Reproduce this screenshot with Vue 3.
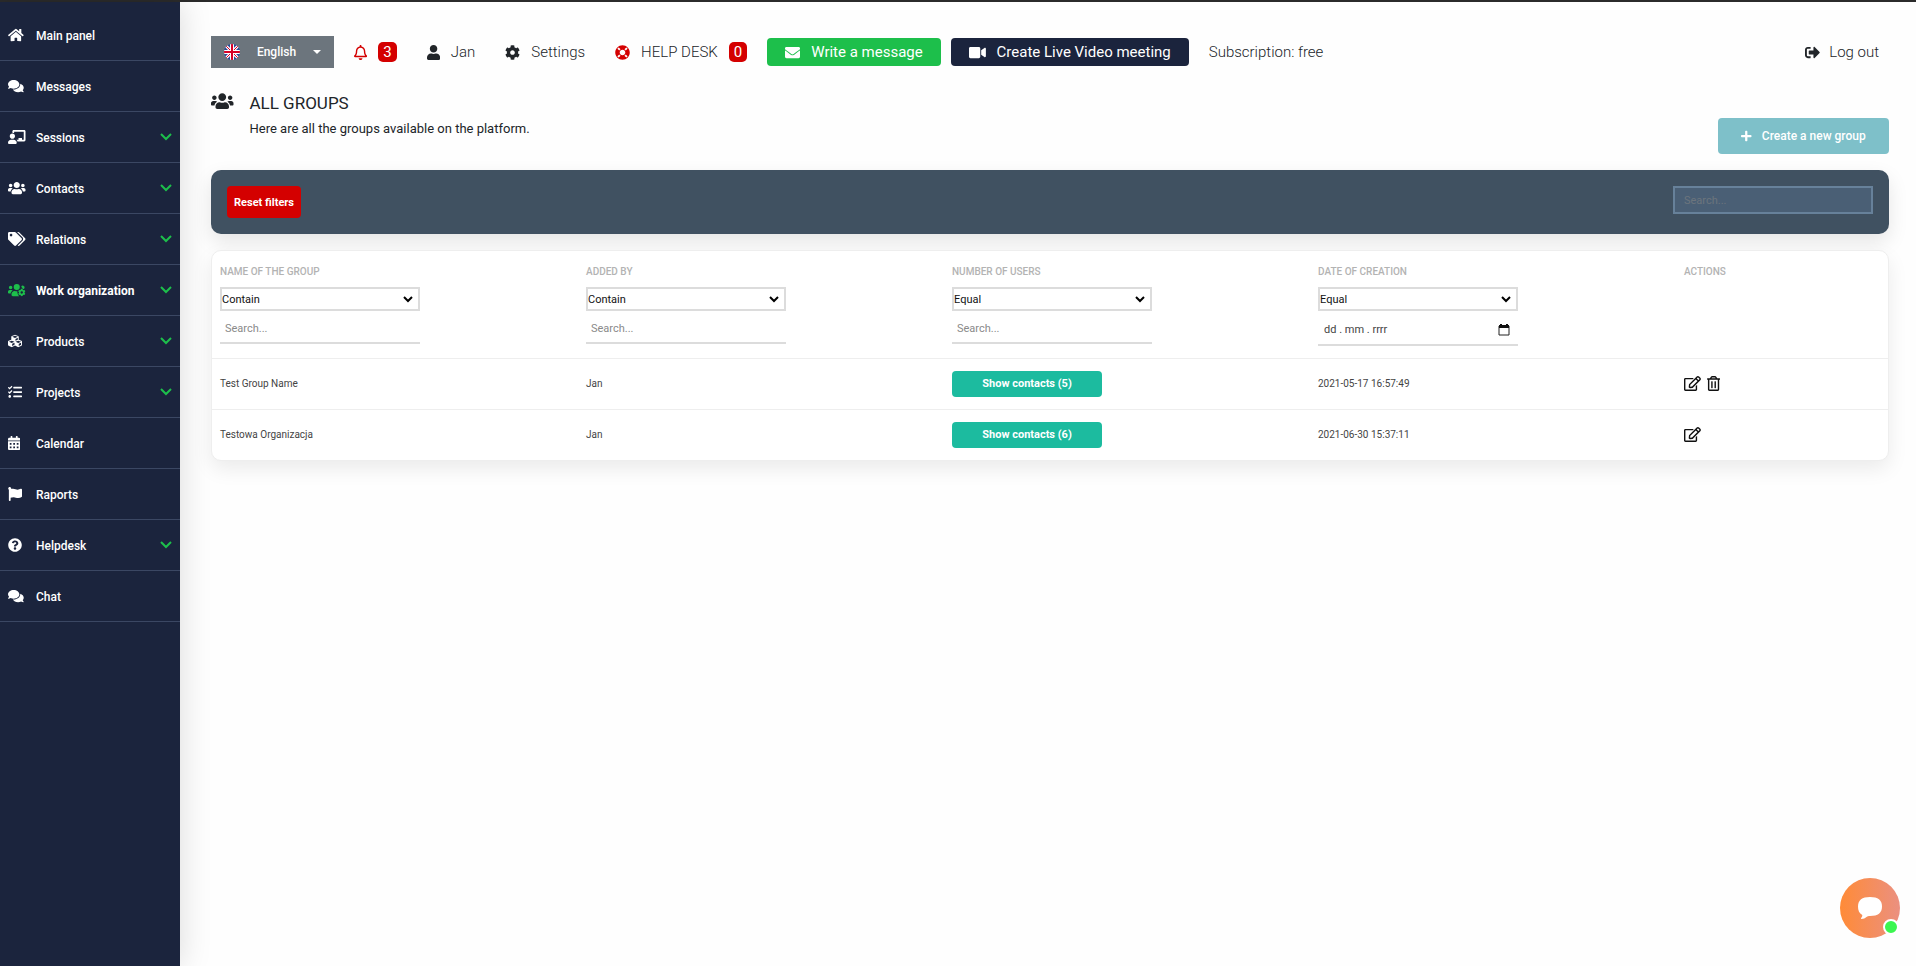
<template>
	<div class="app">
		<aside class="sidebar">
			<nav>
				<a v-for="item in menu" :key="item.label" href="#" class="menu-item" :class="{active: item.active}">
					<span class="menu-icon"><Icon :name="item.icon"/></span>
					<span class="menu-label">{{ item.label }}</span>
					<svg v-if="item.children" class="chevron" viewBox="0 0 12 8" width="12" height="8">
						<path d="M1 1l5 5 5-5" fill="none" stroke="currentColor" stroke-width="2"/>
					</svg>
				</a>
			</nav>
		</aside>

		<main class="content">
			<header class="topbar">
				<button class="language" type="button">
					<svg class="flag" viewBox="0 0 16 16" width="16" height="16">
						<clipPath id="flag-round"><circle cx="8" cy="8" r="8"/></clipPath>
						<g clip-path="url(#flag-round)">
							<rect width="16" height="16" fill="#2a4b9b"/>
							<path d="M0 0l16 16M16 0L0 16" stroke="#fff" stroke-width="3"/>
							<path d="M0 0l16 16M16 0L0 16" stroke="#d80027" stroke-width="1"/>
							<path d="M8 0v16M0 8h16" stroke="#fff" stroke-width="4"/>
							<path d="M8 0v16M0 8h16" stroke="#d80027" stroke-width="2"/>
						</g>
					</svg>
					<span>English</span>
					<span class="caret"></span>
				</button>
				<a href="#" class="top-link bell"><Icon name="bell"/><span class="badge">3</span></a>
				<a href="#" class="top-link user"><Icon name="user"/>Jan</a>
				<a href="#" class="top-link settings"><Icon name="cog"/>Settings</a>
				<a href="#" class="top-link helpdesk"><Icon name="ring"/>HELP DESK<span class="badge">0</span></a>
				<button class="top-button message" type="button"><Icon name="envelope"/>Write a message</button>
				<button class="top-button video" type="button"><Icon name="video"/>Create Live Video meeting</button>
				<span class="subscription">Subscription: free</span>
				<a href="#" class="top-link logout"><Icon name="signout"/>Log out</a>
			</header>

			<section class="heading">
				<Icon name="users"/>
				<div class="heading-text">
					<h1>ALL GROUPS</h1>
					<p>Here are all the groups available on the platform.</p>
				</div>
				<button class="create" type="button"><Icon name="plus"/>Create a new group</button>
			</section>

			<section class="filters">
				<button class="reset" type="button" @click="resetFilters">Reset filters</button>
				<input v-model="search" class="search" type="text" placeholder="Search..." aria-label="Search"/>
			</section>

			<section class="card">
				<table>
					<thead>
						<tr>
							<th v-for="column in columns" :key="column.key">
								<label :for="column.key">{{ column.title }}</label>
								<div class="select-field">
									<select :id="column.key" v-model="column.mode">
										<option>Contain</option>
										<option>Equal</option>
									</select>
									<svg viewBox="0 0 10 7" width="10" height="7">
										<path d="M1 1l4 4 4-4" fill="none" stroke="#000" stroke-width="2"/>
									</svg>
								</div>
								<div v-if="column.date" class="date-field">
									<input v-model="column.value" type="text" placeholder="dd . mm . rrrr" :aria-label="column.title"/>
									<svg viewBox="0 0 12 12" width="12" height="12">
										<path d="M1 2h10v9H1z" fill="none" stroke="#222" stroke-width="1"/>
										<path d="M1 1h10v3H1zM2 0h2v2H2zM8 0h2v2H8z" fill="#111"/>
									</svg>
								</div>
								<input v-else v-model="column.value" class="column-search" type="text" placeholder="Search..." :aria-label="column.title"/>
							</th>
							<th>ACTIONS</th>
						</tr>
					</thead>
					<tbody>
						<tr v-for="group in groups" :key="group.name">
							<td>{{ group.name }}</td>
							<td>{{ group.author }}</td>
							<td><button class="contacts" type="button">Show contacts ({{ group.users }})</button></td>
							<td>{{ group.created }}</td>
							<td>
								<div class="actions">
									<button type="button" aria-label="Edit"><Icon name="edit"/></button>
									<button v-if="group.removable" type="button" aria-label="Delete"><Icon name="trash"/></button>
								</div>
							</td>
						</tr>
					</tbody>
				</table>
			</section>
		</main>

		<button class="chat" type="button" aria-label="Open chat">
			<svg viewBox="0 0 24 24" width="24" height="24">
				<path d="M12 1C20 1 24 4 24 10.500S20 20 12 20c-1.500 0-2.500.3-3.500 1-1.300 1-3 2-5 2-.7 0-.7-.7-.2-1.200.8-.9 1.100-1.800 1-2.800C1.300 17.500 0 14.500 0 10.500 0 4 4 1 12 1z" fill="#fff"/>
			</svg>
			<span class="online"></span>
		</button>
	</div>
</template>

<script setup>
import { ref, h } from 'vue'

// [viewBox width, path], all icons are 512 high
const icons = {
	home: [576, 'M280.37 148.26L96 300.11V464a16 16 0 0 0 16 16l112.06-.29a16 16 0 0 0 15.92-16V368a16 16 0 0 1 16-16h64a16 16 0 0 1 16 16v95.64a16 16 0 0 0 16 16.05L464 480a16 16 0 0 0 16-16V300L295.67 148.26a12.19 12.19 0 0 0-15.3 0zM571.6 251.47L488 182.56V44.05a12 12 0 0 0-12-12h-56a12 12 0 0 0-12 12v72.61L318.47 43a48 48 0 0 0-61 0L4.34 251.47a12 12 0 0 0-1.6 16.9l25.5 31A12 12 0 0 0 45.15 301l235.22-193.74a12.19 12.19 0 0 1 15.3 0L530.9 301a12 12 0 0 0 16.9-1.6l25.5-31a12 12 0 0 0-1.7-16.93z'],
	comments: [576, 'M416 192c0-88.4-93.1-160-208-160S0 103.6 0 192c0 34.3 14.1 65.9 38 92-13.4 30.2-35.5 54.2-35.8 54.5-2.2 2.3-2.8 5.7-1.5 8.7S4.8 352 8 352c36.6 0 66.9-12.3 88.7-25 32.2 15.7 70.3 25 111.3 25 114.9 0 208-71.6 208-160zm122 220c23.9-26 38-57.7 38-92 0-66.9-53.5-124.2-129.3-148.1.9 6.6 1.3 13.3 1.3 20.1 0 105.9-107.7 192-240 192-10.8 0-21.3-.8-31.7-1.9C207.8 439.6 281.8 480 368 480c41 0 79.1-9.2 111.3-25 21.8 12.7 52.1 25 88.7 25 3.2 0 6.1-1.9 7.3-4.8 1.3-2.9.7-6.3-1.5-8.7-.3-.3-22.4-24.2-35.8-54.5z'],
	teacher: [640, 'M208 352c-2.39 0-4.78.35-7.06 1.09C187.98 357.3 174.35 360 160 360c-14.35 0-27.98-2.7-40.95-6.91-2.28-.74-4.66-1.09-7.05-1.09C49.94 352-.33 402.48 0 464.62.14 490.88 21.73 512 48 512h224c26.27 0 47.86-21.12 48-47.38.33-62.14-49.94-112.62-112-112.62zm-48-32c53.02 0 96-42.98 96-96s-42.98-96-96-96-96 42.98-96 96 42.98 96 96 96zM592 0H208c-26.47 0-48 22.25-48 49.59V96c23.42 0 45.1 6.78 64 17.8V64h352v288h-64v-64H384v64h-76.24c19.1 16.69 33.12 38.73 39.69 64H592c26.47 0 48-22.25 48-49.59V49.59C640 22.25 618.47 0 592 0z'],
	users: [640, 'M96 224c35.3 0 64-28.7 64-64s-28.7-64-64-64-64 28.7-64 64 28.7 64 64 64zm448 0c35.3 0 64-28.7 64-64s-28.7-64-64-64-64 28.7-64 64 28.7 64 64 64zm32 32h-64c-17.6 0-33.5 7.1-45.1 18.6 40.3 22.1 68.9 62 75.1 109.4h66c17.7 0 32-14.3 32-32v-32c0-35.3-28.7-64-64-64zm-256 0c61.9 0 112-50.1 112-112S381.9 32 320 32 208 82.1 208 144s50.1 112 112 112zm76.8 32h-8.3c-20.8 10-43.9 16-68.5 16s-47.6-6-68.5-16h-8.3C179.6 288 128 339.6 128 403.2V432c0 26.500 21.500 48 48 48h288c26.500 0 48-21.500 48-48v-28.8c0-63.6-51.6-115.2-115.2-115.2zm-223.700-13.400C161.500 263.100 145.600 256 128 256H64c-35.300 0-64 28.700-64 64v32c0 17.700 14.300 32 32 32h65.900c6.300-47.400 34.900-87.300 75.200-109.400z'],
	tags: [640, 'M497.941 225.941L286.059 14.059A48 48 0 0 0 252.118 0H48C21.49 0 0 21.49 0 48v204.118a48 48 0 0 0 14.059 33.941l211.882 211.882c18.744 18.745 49.136 18.746 67.882 0l204.118-204.118c18.745-18.745 18.745-49.137 0-67.882zM112 160c-26.51 0-48-21.49-48-48s21.49-48 48-48 48 21.49 48 48-21.49 48-48 48zm513.941 133.823L421.823 497.941c-18.745 18.745-49.137 18.745-67.882 0l-.36-.36L527.64 323.522c16.999-16.999 26.362-39.6 26.362-63.64s-9.362-46.641-26.362-63.64L331.397 0h48.721a48 48 0 0 1 33.941 14.059l211.882 211.882c18.745 18.745 18.745 49.137 0 67.882z'],
	cubes: [512, 'M488.6 250.2L392 214V105.5c0-15-9.3-28.4-23.4-33.7l-100-37.5c-8.1-3.1-17.1-3.1-25.3 0l-100 37.5c-14.1 5.3-23.4 18.7-23.4 33.7V214l-96.6 36.2C9.3 255.5 0 268.9 0 283.9V394c0 13.6 7.7 26.1 19.9 32.2l100 50c10.1 5.1 22.1 5.1 32.2 0l103.900-52 103.900 52c10.100 5.100 22.100 5.100 32.200 0l100-50c12.200-6.100 19.900-18.600 19.900-32.200V283.900c0-15-9.300-28.400-23.400-33.700zM358 214.800l-85 31.900v-68.200l85-37v73.300zM154 104.100l102-38.200 102 38.200v.6l-102 41.400-102-41.400v-.6zm84 291.100l-85 42.500v-79.100l85-38.800v75.400zm0-112l-102 41.400-102-41.400v-.6l102-38.200 102 38.200v.6zm240 112l-85 42.500v-79.100l85-38.800v75.400zm0-112l-102 41.400-102-41.400v-.6l102-38.200 102 38.200v.6z'],
	tasks: [512, 'M139.61 35.5a12 12 0 0 0-17 0L58.93 98.81l-22.7-22.12a12 12 0 0 0-17 0L3.53 92.41a12 12 0 0 0 0 17l47.59 47.4a12.78 12.78 0 0 0 17.61 0l15.59-15.62L156.52 69a12.09 12.09 0 0 0 .09-17zm0 159.19a12 12 0 0 0-17 0l-63.68 63.72-22.7-22.1a12 12 0 0 0-17 0L3.53 252a12 12 0 0 0 0 17L51 316.5a12.77 12.77 0 0 0 17.6 0l15.7-15.69 72.2-72.22a12 12 0 0 0 .09-16.9zM64 368c-26.49 0-48.59 21.5-48.59 48S37.53 464 64 464a48 48 0 0 0 0-96zm432 16H208a16 16 0 0 0-16 16v32a16 16 0 0 0 16 16h288a16 16 0 0 0 16-16v-32a16 16 0 0 0-16-16zm0-320H208a16 16 0 0 0-16 16v32a16 16 0 0 0 16 16h288a16 16 0 0 0 16-16V80a16 16 0 0 0-16-16zm0 160H208a16 16 0 0 0-16 16v32a16 16 0 0 0 16 16h288a16 16 0 0 0 16-16v-32a16 16 0 0 0-16-16z'],
	calendar: [448, 'M0 464c0 26.5 21.5 48 48 48h352c26.500 0 48-21.500 48-48V192H0zM320 256h64v64h-64zM320 384h64v64h-64zM192 256h64v64h-64zM192 384h64v64h-64zM64 256h64v64H64zM64 384h64v64H64zM400 64h-48V16c0-8.800-7.200-16-16-16h-32c-8.800 0-16 7.200-16 16v48H160V16c0-8.800-7.200-16-16-16h-32c-8.800 0-16 7.200-16 16v48H48C21.500 64 0 85.500 0 112v48h448v-48c0-26.500-21.500-48-48-48z'],
	flag: [512, 'M349.565 98.783C295.978 98.783 251.721 64 184.348 64c-24.955 0-47.309 4.384-68.045 12.013a55.947 55.947 0 0 0 3.586-23.562C118.117 24.015 94.806 1.206 66.338.048 34.345-1.254 8 24.296 8 56c0 19.026 9.497 35.825 24 45.945V488c0 13.255 10.745 24 24 24h16c13.255 0 24-10.745 24-24v-94.4c28.311-12.064 63.582-22.122 114.435-22.122 53.588 0 97.844 34.783 165.217 34.783 48.169 0 86.667-16.294 122.505-40.858C506.84 359.452 512 349.571 512 339.045v-243.1c0-23.393-24.269-38.87-45.485-29.016-34.338 15.948-76.454 31.854-116.95 31.854z'],
	question: [512, 'M504 256c0 136.997-111.043 248-248 248S8 392.997 8 256C8 119.083 119.043 8 256 8s248 111.083 248 248zM262.655 90c-54.497 0-89.255 22.957-116.549 63.758-3.536 5.286-2.353 12.415 2.715 16.258l34.699 26.31c5.205 3.947 12.621 3.008 16.665-2.122 17.864-22.658 30.113-35.797 57.303-35.797 20.429 0 45.698 13.148 45.698 32.958 0 14.976-12.363 22.667-32.534 33.976C247.128 238.528 216 254.941 216 296v4c0 6.627 5.373 12 12 12h56c6.627 0 12-5.373 12-12v-1.333c0-28.462 83.186-29.647 83.186-106.667 0-58.002-60.165-102-116.531-102zM256 338c-25.365 0-46 20.635-46 46 0 25.364 20.635 46 46 46s46-20.636 46-46c0-25.365-20.635-46-46-46z'],
	bell: [448, 'M439.39 362.29c-19.32-20.76-55.47-51.99-55.47-154.29 0-77.7-54.48-139.9-127.94-155.16V32c0-17.67-14.32-32-31.98-32s-31.98 14.33-31.98 32v20.84C118.56 68.1 64.08 130.3 64.08 208c0 102.3-36.15 133.53-55.47 154.29-6 6.45-8.66 14.16-8.61 21.71.11 16.4 12.98 32 32.1 32h383.8c19.12 0 32-15.6 32.1-32 .05-7.55-2.61-15.27-8.61-21.71zM67.53 368c21.22-27.97 44.42-74.33 44.53-159.42 0-.2-.06-.38-.06-.58 0-61.86 50.14-112 112-112s112 50.14 112 112c0 .2-.06.38-.06.58.11 85.1 23.31 131.46 44.53 159.42H67.53zM224 512c35.32 0 63.97-28.65 63.97-64H160.03c0 35.35 28.65 64 63.97 64z'],
	user: [448, 'M224 256c70.7 0 128-57.3 128-128S294.7 0 224 0 96 57.3 96 128s57.3 128 128 128zm89.6 32h-16.7c-22.2 10.2-46.9 16-72.9 16s-50.6-5.8-72.9-16h-16.7C60.2 288 0 348.2 0 422.4V464c0 26.5 21.5 48 48 48h352c26.5 0 48-21.5 48-48v-41.6c0-74.2-60.2-134.4-134.4-134.4z'],
	cog: [512, 'M487.4 315.7l-42.6-24.6c4.3-23.2 4.3-47 0-70.2l42.6-24.6c4.9-2.8 7.1-8.6 5.5-14-11.1-35.6-30-67.8-54.7-94.6-3.8-4.1-10-5.1-14.8-2.3L380.8 110c-17.9-15.4-38.5-27.3-60.8-35.1V25.8c0-5.6-3.9-10.5-9.4-11.7-36.7-8.2-74.3-7.8-109.2 0-5.5 1.2-9.4 6.1-9.4 11.7V75c-22.2 7.9-42.8 19.8-60.8 35.1L88.7 85.5c-4.9-2.8-11-1.9-14.8 2.3-24.7 26.7-43.6 58.9-54.7 94.6-1.7 5.4.6 11.2 5.5 14L67.3 221c-4.3 23.2-4.3 47 0 70.2l-42.6 24.6c-4.9 2.8-7.1 8.6-5.5 14 11.1 35.6 30 67.8 54.7 94.6 3.8 4.1 10 5.1 14.8 2.3l42.6-24.6c17.9 15.4 38.5 27.3 60.8 35.1v49.2c0 5.6 3.9 10.5 9.4 11.7 36.7 8.2 74.3 7.8 109.2 0 5.5-1.2 9.4-6.1 9.4-11.7v-49.2c22.2-7.9 42.8-19.8 60.8-35.1l42.6 24.6c4.9 2.8 11 1.9 14.8-2.3 24.7-26.7 43.6-58.9 54.7-94.6 1.5-5.5-.7-11.3-5.6-14.1zM256 336c-44.1 0-80-35.9-80-80s35.9-80 80-80 80 35.9 80 80-35.9 80-80 80z'],
	ring: [512, 'M256 8C119.033 8 8 119.033 8 256s111.033 248 248 248 248-111.033 248-248S392.967 8 256 8zm173.696 119.559l-63.399 63.399c-10.987-18.559-26.67-34.252-45.255-45.255l63.399-63.399a218.396 218.396 0 0 1 45.255 45.255zM256 352c-53.019 0-96-42.981-96-96s42.981-96 96-96 96 42.981 96 96-42.981 96-96 96zM127.559 82.304l63.399 63.399c-18.559 10.987-34.252 26.67-45.255 45.255l-63.399-63.399a218.372 218.372 0 0 1 45.255-45.255zM82.304 384.441l63.399-63.399c10.987 18.559 26.67 34.252 45.255 45.255l-63.399 63.399a218.396 218.396 0 0 1-45.255-45.255zm302.137 45.255l-63.399-63.399c18.559-10.987 34.252-26.67 45.255-45.255l63.399 63.399a218.403 218.403 0 0 1-45.255 45.255z'],
	envelope: [512, 'M502.3 190.8c3.9-3.1 9.7-.2 9.7 4.7V400c0 26.5-21.5 48-48 48H48c-26.5 0-48-21.5-48-48V195.6c0-5 5.7-7.8 9.7-4.7 22.4 17.4 52.1 39.5 154.1 113.6 21.1 15.4 56.7 47.8 92.2 47.6 35.7.3 72-32.8 92.3-47.6 102-74.1 131.6-96.3 154-113.7zM256 320c23.2.4 56.6-29.2 73.4-41.4 132.7-96.3 142.8-104.7 173.4-128.7 5.8-4.5 9.2-11.5 9.2-18.9v-19c0-26.5-21.5-48-48-48H48c-26.5 0-48 21.5-48 48v19c0 7.4 3.4 14.3 9.2 18.9 30.6 23.9 40.7 32.4 173.4 128.7 16.8 12.2 50.2 41.8 73.4 41.4z'],
	video: [576, 'M336.2 64H47.8C21.4 64 0 85.4 0 111.8v288.4C0 426.6 21.4 448 47.8 448h288.4c26.4 0 47.8-21.4 47.8-47.8V111.8c0-26.4-21.4-47.8-47.8-47.8zm189.4 37.7L416 177.3v157.4l109.6 75.5c21.2 14.6 50.4-.3 50.4-25.8V127.5c0-25.4-29.1-40.4-50.4-25.8z'],
	signout: [512, 'M497 273L329 441c-15 15-41 4.5-41-17v-96H152c-13.3 0-24-10.7-24-24v-96c0-13.3 10.7-24 24-24h136V88c0-21.4 25.9-32 41-17l168 168c9.3 9.4 9.3 24.6 0 34zM192 436v-40c0-6.6-5.4-12-12-12H96c-17.7 0-32-14.3-32-32V160c0-17.7 14.3-32 32-32h84c6.6 0 12-5.4 12-12V76c0-6.6-5.4-12-12-12H96c-53 0-96 43-96 96v192c0 53 43 96 96 96h84c6.6 0 12-5.4 12-12z'],
	plus: [448, 'M416 208H272V64c0-17.67-14.33-32-32-32h-32c-17.67 0-32 14.33-32 32v144H32c-17.67 0-32 14.33-32 32v32c0 17.67 14.33 32 32 32h144v144c0 17.67 14.33 32 32 32h32c17.67 0 32-14.33 32-32V304h144c17.67 0 32-14.33 32-32v-32c0-17.67-14.33-32-32-32z'],
	edit: [576, 'M402.3 344.9l32-32c5-5 13.7-1.5 13.7 5.7V464c0 26.5-21.5 48-48 48H48c-26.5 0-48-21.5-48-48V112c0-26.5 21.5-48 48-48h273.5c7.1 0 10.7 8.6 5.7 13.7l-32 32c-1.5 1.5-3.5 2.3-5.7 2.3H48v352h352V350.5c0-2.1.8-4.1 2.3-5.6zm156.6-201.8L296.3 405.7l-90.4 10c-26.2 2.9-48.5-19.2-45.6-45.6l10-90.4L432.9 17.1c22.9-22.9 59.9-22.9 82.7 0l43.2 43.2c22.9 22.9 22.9 60 .1 82.8zM460.1 174L402 115.9 216.2 301.8l-7.3 65.3 65.3-7.3L460.1 174zm64.8-79.7l-43.2-43.2c-4.1-4.1-10.8-4.1-14.8 0L436 82l58.1 58.1 30.9-30.9c4-4.2 4-10.8-.1-14.9z'],
	trash: [448, 'M268 416h24a12 12 0 0 0 12-12V188a12 12 0 0 0-12-12h-24a12 12 0 0 0-12 12v216a12 12 0 0 0 12 12zM432 80h-82.41l-34-56.7A48 48 0 0 0 274.41 0H173.59a48 48 0 0 0-41.16 23.3L98.41 80H16A16 16 0 0 0 0 96v16a16 16 0 0 0 16 16h16v336a48 48 0 0 0 48 48h288a48 48 0 0 0 48-48V128h16a16 16 0 0 0 16-16V96a16 16 0 0 0-16-16zM171.84 50.91A6 6 0 0 1 177 48h94a6 6 0 0 1 5.15 2.91L293.61 80H154.39zM368 464H80V128h288zm-212-48h24a12 12 0 0 0 12-12V188a12 12 0 0 0-12-12h-24a12 12 0 0 0-12 12v216a12 12 0 0 0 12 12z']
}

// users with a small cog in the lower right corner
const usersCog = () => [
	h('path', { d: 'M96 224a64 64 0 1 0 0-128 64 64 0 0 0 0 128zM320 256a112 112 0 1 0 0-224 112 112 0 0 0 0 224zM544 224a64 64 0 1 0-60-86c22 20 40 40 60 86zM173 275C161 263 146 256 128 256H64c-35 0-64 29-64 64v32c0 18 14 32 32 32h66c6-47 35-87 75-109zM340 303c-33 4-63-1-88-15h-9c-63 0-115 52-115 115v29c0 26 22 48 48 48h232c-42-33-68-100-68-177z' }),
	h('path', { d: icons.cog[1], transform: 'translate(365 210) scale(.54)' })
]

const Icon = ({ name }) => {
	const width = name === 'usersCog' ? 640 : icons[name][0]
	return h('svg', {
		viewBox: `0 0 ${width} 512`,
		width: `${width / 512}em`,
		height: '1em',
		fill: 'currentColor',
		'fill-rule': name === 'calendar' ? 'evenodd' : 'nonzero',
		'aria-hidden': 'true'
	}, name === 'usersCog' ? usersCog() : [h('path', { d: icons[name][1] })])
}
Icon.props = ['name']

const menu = [
	{ label: 'Main panel', icon: 'home' },
	{ label: 'Messages', icon: 'comments' },
	{ label: 'Sessions', icon: 'teacher', children: true },
	{ label: 'Contacts', icon: 'users', children: true },
	{ label: 'Relations', icon: 'tags', children: true },
	{ label: 'Work organization', icon: 'usersCog', children: true, active: true },
	{ label: 'Products', icon: 'cubes', children: true },
	{ label: 'Projects', icon: 'tasks', children: true },
	{ label: 'Calendar', icon: 'calendar' },
	{ label: 'Raports', icon: 'flag' },
	{ label: 'Helpdesk', icon: 'question', children: true },
	{ label: 'Chat', icon: 'comments' }
]

const search = ref('')
const columns = ref([
	{ key: 'name', title: 'NAME OF THE GROUP', mode: 'Contain', value: '' },
	{ key: 'author', title: 'ADDED BY', mode: 'Contain', value: '' },
	{ key: 'users', title: 'NUMBER OF USERS', mode: 'Equal', value: '' },
	{ key: 'created', title: 'DATE OF CREATION', mode: 'Equal', value: '', date: true }
])

const groups = [
	{ name: 'Test Group Name', author: 'Jan', users: 5, created: '2021-05-17 16:57:49', removable: true },
	{ name: 'Testowa Organizacja', author: 'Jan', users: 6, created: '2021-06-30 15:37:11' }
]

const resetFilters = () => {
	search.value = ''
	columns.value.forEach(column => { column.value = '' })
}
</script>

<style>
body {
	margin: 0;
	background: #fefefe;
}
</style>

<style scoped>
* {
	box-sizing: border-box;
}

.app {
	display: flex;
	min-height: 100vh;
	border-top: 2px solid #2b2b2b;
	font-family: Roboto, sans-serif;
	color: #212529;
}

a {
	color: inherit;
	text-decoration: none;
}

button, input, select {
	font-family: inherit;
	border: none;
}

button {
	cursor: pointer;
}

svg {
	flex-shrink: 0;
}

.sidebar {
	flex: 0 0 180px;
	padding-top: 8px;
	background: #1b243d;
	box-shadow: 0 0 30px rgba(0, 0, 0, 0.15);
}

.menu-item {
	display: flex;
	align-items: center;
	height: 51px;
	padding: 0 8px;
	border-bottom: 1px solid #3b4763;
	color: #fff;
	font-size: 12px;
	font-weight: 500;
}

.menu-icon {
	display: flex;
	width: 28px;
	font-size: 14px;
}

.menu-label {
	flex: 1;
	padding-top: 2px;
}

.chevron {
	color: #1dbf4b;
}

.active {
	font-weight: 700;
}

.active .menu-icon {
	color: #1dbf4b;
}

.content {
	flex: 1;
	min-width: 0;
	padding: 34px 27px 0 31px;
}

.topbar {
	display: flex;
	align-items: center;
	height: 32px;
	font-size: 15px;
	font-weight: 300;
}

.language {
	display: flex;
	align-items: center;
	justify-content: space-between;
	width: 123px;
	height: 32px;
	padding: 0 13px;
	background: #6c757d;
	color: #fff;
	font-size: 12px;
	font-weight: 500;
}

.caret {
	border: 4px solid transparent;
	border-top-color: #fff;
	border-bottom: 0;
}

.top-link {
	display: flex;
	align-items: center;
	gap: 11px;
}

.badge {
	padding: 0 5px;
	border-radius: 5px;
	background: #d40000;
	color: #fff;
	font-size: 15px;
	font-weight: 400;
	line-height: 20px;
}

.bell {
	margin-left: 20px;
	color: #d40000;
}

.user, .settings, .helpdesk {
	margin-left: 30px;
}

.helpdesk > svg {
	color: #d40000;
}

.top-button {
	display: flex;
	align-items: center;
	justify-content: center;
	gap: 11px;
	height: 28px;
	padding: 0 18px;
	border-radius: 4px;
	color: #fff;
	font-size: 15px;
	font-weight: 400;
}

.message {
	margin-left: 20px;
	background: #1dbf4b;
}

.video {
	margin-left: 10px;
	background: #1b243d;
}

.subscription {
	margin-left: 20px;
}

.logout {
	gap: 9px;
	margin-left: auto;
	padding-right: 10px;
}

.heading {
	display: flex;
	height: 102px;
	padding-top: 24px;
}

.heading > svg {
	font-size: 18px;
}

.heading-text {
	flex: 1;
	padding-left: 16px;
}

h1 {
	margin: 0;
	font-size: 17px;
	font-weight: 400;
	line-height: 22px;
}

p {
	margin: 5px 0 0;
	font-size: 13px;
	line-height: 20px;
}

.create {
	display: flex;
	align-items: center;
	justify-content: center;
	gap: 10px;
	align-self: flex-end;
	width: 171px;
	height: 36px;
	margin-bottom: 16px;
	border-radius: 4px;
	background: #7ec0c9;
	color: #fff;
	font-size: 12px;
	font-weight: 500;
}

.filters {
	display: flex;
	justify-content: space-between;
	align-items: flex-start;
	height: 64px;
	padding: 16px;
	border-radius: 10px;
	background: #405161;
	box-shadow: 0 8px 20px rgba(0, 0, 0, 0.1);
}

.reset {
	height: 32px;
	padding: 0 7px;
	border-radius: 4px;
	background: #d40000;
	color: #fff;
	font-size: 11px;
	font-weight: 700;
}

.search {
	width: 200px;
	height: 28px;
	padding: 0 9px;
	border: 2px solid #67819a;
	background: #4a5f75;
	color: #fff;
	font-size: 11px;
}

.search::placeholder {
	color: #6c757d;
}

.card {
	margin-top: 16px;
	border: 1px solid #eee;
	border-radius: 10px;
	background: #fff;
	box-shadow: 0 8px 20px rgba(0, 0, 0, 0.08);
}

table {
	width: 100%;
	table-layout: fixed;
	border-collapse: collapse;
}

th, td {
	padding: 0 8px;
	text-align: left;
	font-size: 10px;
	font-weight: 400;
	color: #444;
}

th {
	height: 107px;
	padding-top: 12px;
	vertical-align: top;
	color: #b3b3b3;
	font-weight: 500;
	line-height: 18px;
}

th:last-child {
	width: 212px;
}

td {
	height: 51px;
	border-top: 1px solid #eee;
}

label {
	display: block;
}

.select-field {
	position: relative;
	width: 200px;
	margin-top: 6px;
}

.select-field svg {
	position: absolute;
	top: 9px;
	right: 7px;
	pointer-events: none;
}

select {
	display: block;
	width: 100%;
	height: 24px;
	padding: 0;
	appearance: none;
	border: 2px solid #dcdcdc;
	border-radius: 0;
	background: #fff;
	color: #111;
	font-size: 11px;
}

.column-search {
	display: block;
	width: 200px;
	height: 33px;
	padding: 4px 5px 0;
	border-bottom: 2px solid #dcdcdc;
	background: none;
	font-size: 11px;
}

.column-search::placeholder {
	color: #8a8a8a;
}

.date-field {
	display: flex;
	align-items: center;
	width: 200px;
	height: 35px;
	padding: 4px 8px 0 6px;
	border-bottom: 2px solid #dcdcdc;
}

.date-field input {
	flex: 1;
	min-width: 0;
	padding: 0;
	font-size: 11px;
}

.date-field input::placeholder {
	color: #444;
}

.contacts {
	display: block;
	width: 150px;
	height: 26px;
	border-radius: 4px;
	background: #1cbb9f;
	color: #fff;
	font-size: 11px;
	font-weight: 700;
}

.actions {
	display: flex;
	gap: 6px;
}

.actions button {
	display: flex;
	padding: 0;
	background: none;
	color: #111;
	font-size: 15px;
}

.chat {
	position: fixed;
	right: 16px;
	bottom: 28px;
	display: flex;
	align-items: center;
	justify-content: center;
	width: 60px;
	height: 60px;
	border-radius: 50%;
	background: linear-gradient(90deg, #ff8b37, #eb9080);
}

.online {
	position: absolute;
	right: 1px;
	bottom: 3px;
	width: 16px;
	height: 16px;
	border: 2px solid #fff;
	border-radius: 50%;
	background: #3cf650;
}
</style>
